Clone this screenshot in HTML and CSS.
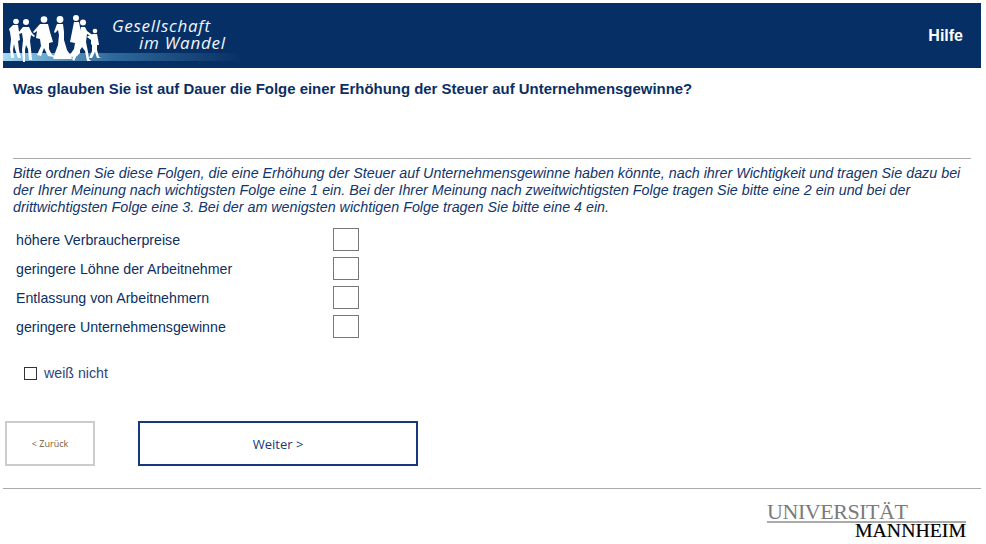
FILE: index.html
```html
<!DOCTYPE html>
<html lang="de">
<head>
<meta charset="utf-8">
<title>Gesellschaft im Wandel</title>
<link rel="stylesheet" href="styles.css">
</head>
<body>
<header class="banner">
  <div class="brand">
    <svg class="brand-art" viewBox="3 3 240 65" width="240" height="65" aria-hidden="true">
      <defs>
        <linearGradient id="strip" x1="0" x2="1" y1="0" y2="0">
          <stop offset="0" stop-color="#a6dcf2"/>
          <stop offset="0.1" stop-color="#7fbbdc"/>
          <stop offset="0.45" stop-color="#2f6a9c"/>
          <stop offset="1" stop-color="#082f63"/>
        </linearGradient>
      </defs>
      <rect x="3" y="53" width="240" height="8" fill="url(#strip)"/>
      <g fill="#fff">
        <circle cx="16" cy="21.5" r="2.8"/>
        <path d="M13 25h5l1 7 1 8-2 1 1 9 2 8h-3l-3-9-1-5-1 6 1 8h-3l-1-9 1-10-1-7-1-3z"/>
        <circle cx="26" cy="22" r="3"/>
        <path d="M23 27h6l3 6 3 3-1 1-3-2-1 6 1 8 1 11h-3l-1-11-2-4-1 5 0 12h-2l-1-12 1-10-1-7-3 1-1-1z"/>
        <circle cx="44" cy="19.5" r="3.3"/>
        <path d="M40 24h8l2 8 3 10-4 1 0 6 3 6 3 1-1 1-6-1-4-8-3 8-4-1 4-9-1-7-4-1 1-7-3 2-1-1z"/>
        <circle cx="60" cy="19.5" r="3.4"/>
        <path d="M57 24h6l1 8 0 8 3 10 4 6 1 3h-19l2-6 3-8 1-10-1-5-3 3-1-1z"/>
        <circle cx="76" cy="18" r="3"/>
        <path d="M74 22h5l2 10 0 10-1 5 0 6-3 3-5 1-3-1 5-7 1-6-5-1 2-10z"/>
        <circle cx="83" cy="22.5" r="3"/>
        <path d="M81 27h4l2 4 7 5-1 1-6-3-1 8 2 10 1 7 2 2-4 0-2-10-3-4-5 8-3 6-2-2 5-9 3-9 0-9z"/>
        <circle cx="95" cy="31" r="2.3"/>
        <path d="M93 34h4l1 5 1 6-2 0 0 5 2 7 2 1-4 0-2-6-3 6h-3l3-7 0-6-1-1 0-4-4-3 1-1z"/>
      </g>
    </svg>
    <div class="brand-name"><span>Gesellschaft</span><span class="brand-second">im Wandel</span></div>
  </div>
  <a class="help">Hilfe</a>
</header>

<main class="survey">
  <h1 class="question">Was glauben Sie ist auf Dauer die Folge einer Erhöhung der Steuer auf Unternehmensgewinne?</h1>
  <p class="intro">Bitte ordnen Sie diese Folgen, die eine Erhöhung der Steuer auf Unternehmensgewinne haben könnte, nach ihrer Wichtigkeit und tragen Sie dazu bei der Ihrer Meinung nach wichtigsten Folge eine 1 ein. Bei der Ihrer Meinung nach zweitwichtigsten Folge tragen Sie bitte eine 2 ein und bei der drittwichtigsten Folge eine 3. Bei der am wenigsten wichtigen Folge tragen Sie bitte eine 4 ein.</p>
  <div class="ranks">
    <label class="rank"><span class="rank-label">höhere Verbraucherpreise</span><input class="rank-input" type="text"></label>
    <label class="rank"><span class="rank-label">geringere Löhne der Arbeitnehmer</span><input class="rank-input" type="text"></label>
    <label class="rank"><span class="rank-label">Entlassung von Arbeitnehmern</span><input class="rank-input" type="text"></label>
    <label class="rank"><span class="rank-label">geringere Unternehmensgewinne</span><input class="rank-input" type="text"></label>
  </div>
  <label class="dontknow"><span class="box"></span><span>weiß nicht</span></label>
</main>

<nav class="actions">
  <button class="btn btn-back" type="button">&lt; Zurück</button>
  <button class="btn btn-next" type="button">Weiter &gt;</button>
</nav>

<footer class="foot">
  <div class="uni">
    <span class="uni-top">UNIVERSITÄT</span>
    <span class="uni-bottom">MANNHEIM</span>
  </div>
</footer>
</body>
</html>
```

FILE: styles.css
```css
* { box-sizing: border-box; }
html, body { margin: 0; height: 100%; }
body {
  padding: 3px 5px 0 3px;
  background: #fff;
  color: #0c2f63;
  font-family: "Liberation Sans", Arial, sans-serif;
  font-size: 14.2px;
  overflow: hidden;
}
.banner {
  height: 65px;
  background: #063065;
  display: flex;
  align-items: center;
  justify-content: space-between;
  padding-right: 18px;
}
.brand { display: flex; position: relative; height: 65px; width: 240px; }
.brand-art { display: block; }
.brand-name {
  position: absolute;
  left: 109px;
  top: 14px;
  display: flex;
  flex-direction: column;
  color: #f2f5fa;
  font-family: "Open Sans", sans-serif;
  font-style: italic;
  font-size: 17px;
  line-height: 17px;
  letter-spacing: 0.75px;
}
.brand-second { margin-left: 27px; }
.help { color: #fff; font-weight: 700; font-size: 16px; }
.survey { padding: 0 10px; }
.question {
  margin: 12px 0 0;
  font-size: 14.95px;
  line-height: 17px;
  font-weight: 700;
  color: #0c2f63;
  height: 79px;
  border-bottom: 1px solid #aaa;
}
.intro {
  margin: 6px 0 0;
  font-style: italic;
  font-size: 14.3px;
  line-height: 17px;
  color: #12356b;
}
.ranks { margin-top: 12px; padding-left: 3px; display: flex; flex-direction: column; gap: 6px; }
.rank { display: flex; align-items: center; height: 23px; }
.rank-label { width: 317px; }
.rank-input {
  width: 26px;
  height: 23px;
  border: 1px solid #777;
  background: #fff;
  padding: 0;
}
.dontknow { display: flex; align-items: center; gap: 7px; margin: 27px 0 0 11px; height: 16px; color: #2f4478; }
.box { width: 13px; height: 13px; border: 1px solid #333; background: #fff; }
.actions { display: flex; gap: 43px; margin: 40px 0 0 2px; }
.btn { height: 45px; background: #fff; padding: 0; font-family: "Open Sans", sans-serif; }
.btn-back { width: 90px; border: 2px solid #ccc; font-size: 9px; color: #7a5a3c; }
.btn-next { width: 280px; border: 2px solid #17387a; font-size: 13px; color: #17387a; }
.foot { margin-top: 22px; border-top: 1px solid #aaa; display: flex; justify-content: flex-end; padding: 13px 15px 0 0; }
.uni { display: flex; flex-direction: column; align-items: flex-end; width: 199px; font-family: "Liberation Serif", serif; line-height: 1; }
.uni-top { align-self: flex-start; font-size: 22px; color: #7b7b7b; border-bottom: 2px solid #aaa; width: 100%; height: 21px; line-height: 19px; letter-spacing: -0.45px; }
.uni-bottom { font-size: 19.8px; color: #000; height: 15px; line-height: 15px; -webkit-text-stroke: 0.2px #000; }
```
